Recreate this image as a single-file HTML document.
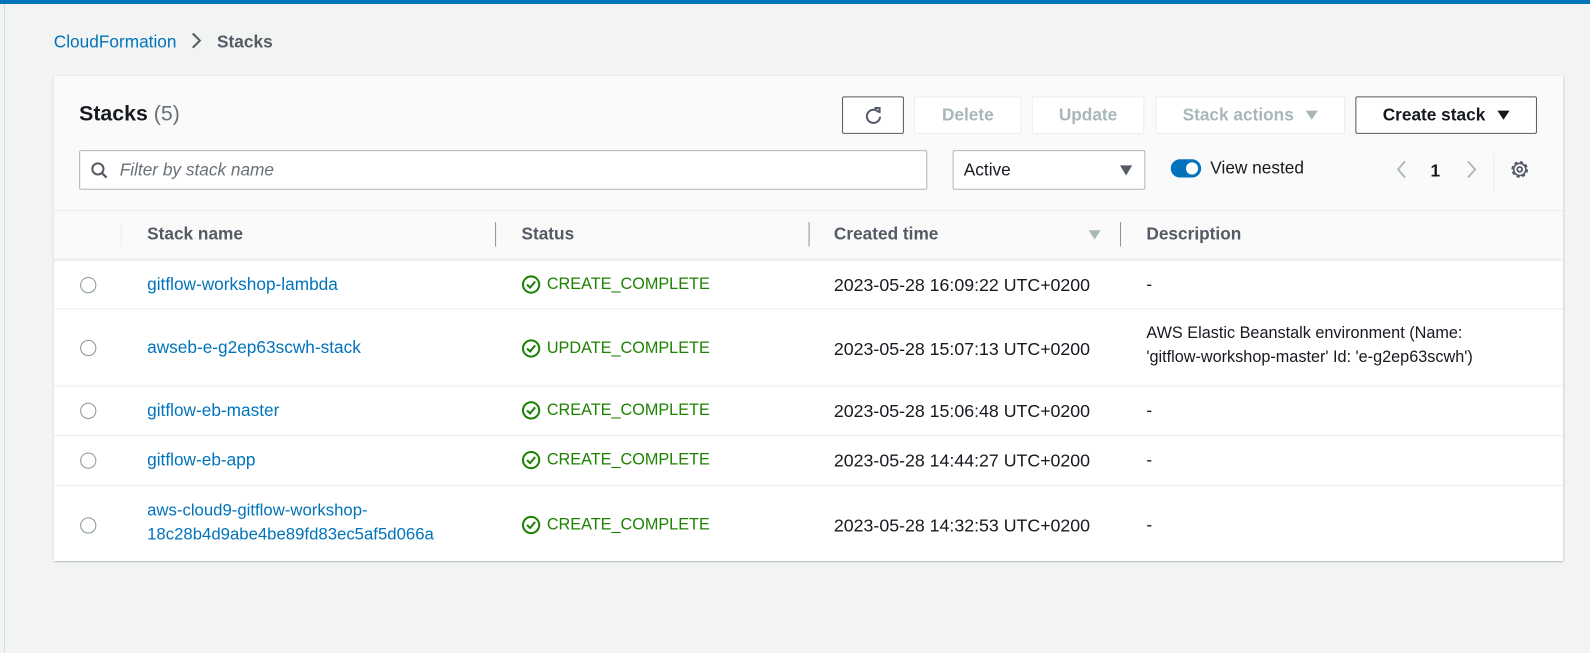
<!DOCTYPE html>
<html><head><style>
*{box-sizing:border-box;margin:0;padding:0}
body{width:1590px;height:653px;background:#f2f3f3;font-family:"Liberation Sans",sans-serif;font-size:17px;color:#16191f;position:relative;overflow:hidden}
#w{position:absolute;left:0;top:0;width:1568px;height:644px;transform:scale(1.0145);transform-origin:0 0}
.topbar{position:absolute;left:0;top:0;width:1590px;height:4px;background:#0073bb}
.leftline{position:absolute;left:4px;top:4px;width:1px;height:649px;background:#d5dbdb}
.crumb{position:absolute;left:53px;top:31px;font-size:17px}
.crumb a{color:#0073bb}
.crumb b{color:#545b64}
.panel{position:absolute;left:53px;top:75px;width:1488px;height:478px;background:#fff;box-shadow:0 1px 2px rgba(0,28,36,.3),1px 1px 1px rgba(0,28,36,.15);}
.head{position:absolute;left:0;top:0;width:100%;height:181px;background:#fafafa;border-bottom:1px solid #eaeded}
.abs{position:absolute}
.btn{position:absolute;top:20px;height:37px;border:1px solid #eaeded;border-radius:2px;background:#fff;color:#aab7b8;font-weight:bold;font-size:17px;display:flex;align-items:center;justify-content:center}
.btn.on{border-color:#545b64;color:#545b64}
.tri{display:inline-block;width:0;height:0;border-left:6px solid transparent;border-right:6px solid transparent;border-top:9px solid currentColor;margin-left:12px}
.row{position:absolute;left:0;width:100%;border-top:1px solid #eaeded}
.rad{position:absolute;left:26px;width:16px;height:16px;border:1.5px solid #879596;border-radius:50%}
.name{position:absolute;left:92px;color:#0073bb;line-height:24px}
.st{position:absolute;left:461px;color:#1d8102;display:flex;align-items:center;font-size:16px}
.st svg{margin-right:6px}
.tm{position:absolute;left:769px;font-size:17.5px}
.ds{position:absolute;left:1077px;line-height:24px}
.hd{position:absolute;top:146px;font-weight:bold;color:#545b64}
.sep{position:absolute;top:144px;width:1px;height:24px;background:#879596}
</style></head><body>
<div class="topbar"></div><div class="leftline"></div>
<div id="w">
<div class="crumb"><a>CloudFormation</a><svg style="margin:0 14px 0 14px;vertical-align:-2px" width="12" height="18" viewBox="0 0 12 18"><path d="M2 2l7 7-7 7" fill="none" stroke="#545b64" stroke-width="2"/></svg><b>Stacks</b></div>
<div class="panel">
<div class="head">
<div class="abs" style="left:25px;top:26px;font-size:21px;font-weight:bold">Stacks <span style="font-weight:normal;color:#687078">(5)</span></div>
<div class="btn on" style="left:777px;width:61px"><svg width="20" height="20" viewBox="0 0 20 20"><path d="M15 6.5A6.5 6.5 0 1 0 16.5 11" fill="none" stroke="#545b64" stroke-width="2"/><path d="M11 2.5L16 2.5L16 7.5" fill="none" stroke="#545b64" stroke-width="2"/></svg></div>
<div class="btn" style="left:848px;width:106px">Delete</div>
<div class="btn" style="left:964px;width:111px">Update</div>
<div class="btn" style="left:1086px;width:187px">Stack actions<span class="tri"></span></div>
<div class="btn on" style="left:1283px;width:179px;color:#16191f">Create stack<span class="tri" style="color:#16191f"></span></div>
<div class="abs" style="left:25px;top:73px;width:836px;height:39px;border:1px solid #aab7b8;border-radius:2px;background:#fff">
<svg class="abs" style="left:10px;top:10px" width="18" height="18" viewBox="0 0 18 18"><circle cx="7.5" cy="7.5" r="5.5" fill="none" stroke="#545b64" stroke-width="2"/><path d="M11.5 11.5L16 16" stroke="#545b64" stroke-width="2.2"/></svg>
<span class="abs" style="left:39px;top:9px;font-style:italic;color:#687078">Filter by stack name</span></div>
<div class="abs" style="left:886px;top:73px;width:190px;height:39px;border:1px solid #aab7b8;border-radius:2px;background:#fff"><span class="abs" style="left:10px;top:9px">Active</span><span class="abs" style="right:12px;top:14px;width:0;height:0;border-left:6px solid transparent;border-right:6px solid transparent;border-top:10px solid #545b64"></span></div>
<div class="abs" style="left:1101px;top:82px;width:30px;height:18px;border-radius:9px;background:#0073bb"><span class="abs" style="left:15px;top:3px;width:12px;height:12px;border-radius:50%;background:#fff"></span></div>
<div class="abs" style="left:1140px;top:81px">View nested</div>
<svg class="abs" style="left:1322px;top:82px" width="12" height="20" viewBox="0 0 12 20"><path d="M10 2L3 10l7 8" fill="none" stroke="#aab7b8" stroke-width="1.8"/></svg>
<div class="abs" style="left:1357px;top:84px;font-weight:bold">1</div>
<svg class="abs" style="left:1392px;top:82px" width="12" height="20" viewBox="0 0 12 20"><path d="M2 2l7 8-7 8" fill="none" stroke="#aab7b8" stroke-width="1.8"/></svg>
<div class="abs" style="left:1419px;top:76px;width:1px;height:38px;background:#eaeded"></div>
<svg class="abs" style="left:1435px;top:82px" width="20" height="20" viewBox="0 0 20 20"><circle cx="10" cy="10" r="7" fill="none" stroke="#545b64" stroke-width="2.4" stroke-dasharray="3 2.5"/><circle cx="10" cy="10" r="6" fill="none" stroke="#545b64" stroke-width="1.6"/><circle cx="10" cy="10" r="2.4" fill="none" stroke="#545b64" stroke-width="1.8"/></svg>
<div class="abs" style="left:0;top:132px;width:100%;height:1px;background:#eaeded"></div>
<div class="sep" style="left:66px;background:#eaeded"></div>
<div class="hd" style="left:92px">Stack name</div>
<div class="sep" style="left:435px"></div>
<div class="hd" style="left:461px">Status</div>
<div class="sep" style="left:744px"></div>
<div class="hd" style="left:769px">Created time</div>
<span class="abs" style="left:1020px;top:152px;width:0;height:0;border-left:6px solid transparent;border-right:6px solid transparent;border-top:9px solid #aab7b8"></span>
<div class="sep" style="left:1051px"></div>
<div class="hd" style="left:1077px">Description</div>
</div>
<div class="row" style="top:181px;height:49px">
<span class="rad" style="top:16px"></span><span class="name" style="top:12px">gitflow-workshop-lambda</span>
<span class="st" style="top:14px"><svg width="19" height="19" viewBox="0 0 19 19"><circle cx="9.5" cy="9.5" r="8" fill="none" stroke="#1d8102" stroke-width="2"/><path d="M5.5 9.5l3 3 5-6" fill="none" stroke="#1d8102" stroke-width="2"/></svg>CREATE_COMPLETE</span>
<span class="tm" style="top:14px">2023-05-28 16:09:22 UTC+0200</span><span class="ds" style="top:12px">-</span></div>
<div class="row" style="top:229px;height:76px">
<span class="rad" style="top:30px"></span><span class="name" style="top:26px">awseb-e-g2ep63scwh-stack</span>
<span class="st" style="top:29px"><svg width="19" height="19" viewBox="0 0 19 19"><circle cx="9.5" cy="9.5" r="8" fill="none" stroke="#1d8102" stroke-width="2"/><path d="M5.5 9.5l3 3 5-6" fill="none" stroke="#1d8102" stroke-width="2"/></svg>UPDATE_COMPLETE</span>
<span class="tm" style="top:29px">2023-05-28 15:07:13 UTC+0200</span><span class="ds" style="top:12px;font-size:16px">AWS Elastic Beanstalk environment (Name:<br>'gitflow-workshop-master' Id: 'e-g2ep63scwh')</span></div>
<div class="row" style="top:305px;height:50px">
<span class="rad" style="top:16px"></span><span class="name" style="top:12px">gitflow-eb-master</span>
<span class="st" style="top:14px"><svg width="19" height="19" viewBox="0 0 19 19"><circle cx="9.5" cy="9.5" r="8" fill="none" stroke="#1d8102" stroke-width="2"/><path d="M5.5 9.5l3 3 5-6" fill="none" stroke="#1d8102" stroke-width="2"/></svg>CREATE_COMPLETE</span>
<span class="tm" style="top:14px">2023-05-28 15:06:48 UTC+0200</span><span class="ds" style="top:12px">-</span></div>
<div class="row" style="top:354px;height:49px">
<span class="rad" style="top:16px"></span><span class="name" style="top:12px">gitflow-eb-app</span>
<span class="st" style="top:14px"><svg width="19" height="19" viewBox="0 0 19 19"><circle cx="9.5" cy="9.5" r="8" fill="none" stroke="#1d8102" stroke-width="2"/><path d="M5.5 9.5l3 3 5-6" fill="none" stroke="#1d8102" stroke-width="2"/></svg>CREATE_COMPLETE</span>
<span class="tm" style="top:14px">2023-05-28 14:44:27 UTC+0200</span><span class="ds" style="top:12px">-</span></div>
<div class="row" style="top:403px;height:75px">
<span class="rad" style="top:31px"></span><span class="name" style="top:12px;font-size:16.5px">aws-cloud9-gitflow-workshop-<br>18c28b4d9abe4be89fd83ec5af5d066a</span>
<span class="st" style="top:29px"><svg width="19" height="19" viewBox="0 0 19 19"><circle cx="9.5" cy="9.5" r="8" fill="none" stroke="#1d8102" stroke-width="2"/><path d="M5.5 9.5l3 3 5-6" fill="none" stroke="#1d8102" stroke-width="2"/></svg>CREATE_COMPLETE</span>
<span class="tm" style="top:29px">2023-05-28 14:32:53 UTC+0200</span><span class="ds" style="top:27px">-</span></div>
</div>
</div>
</body></html>
